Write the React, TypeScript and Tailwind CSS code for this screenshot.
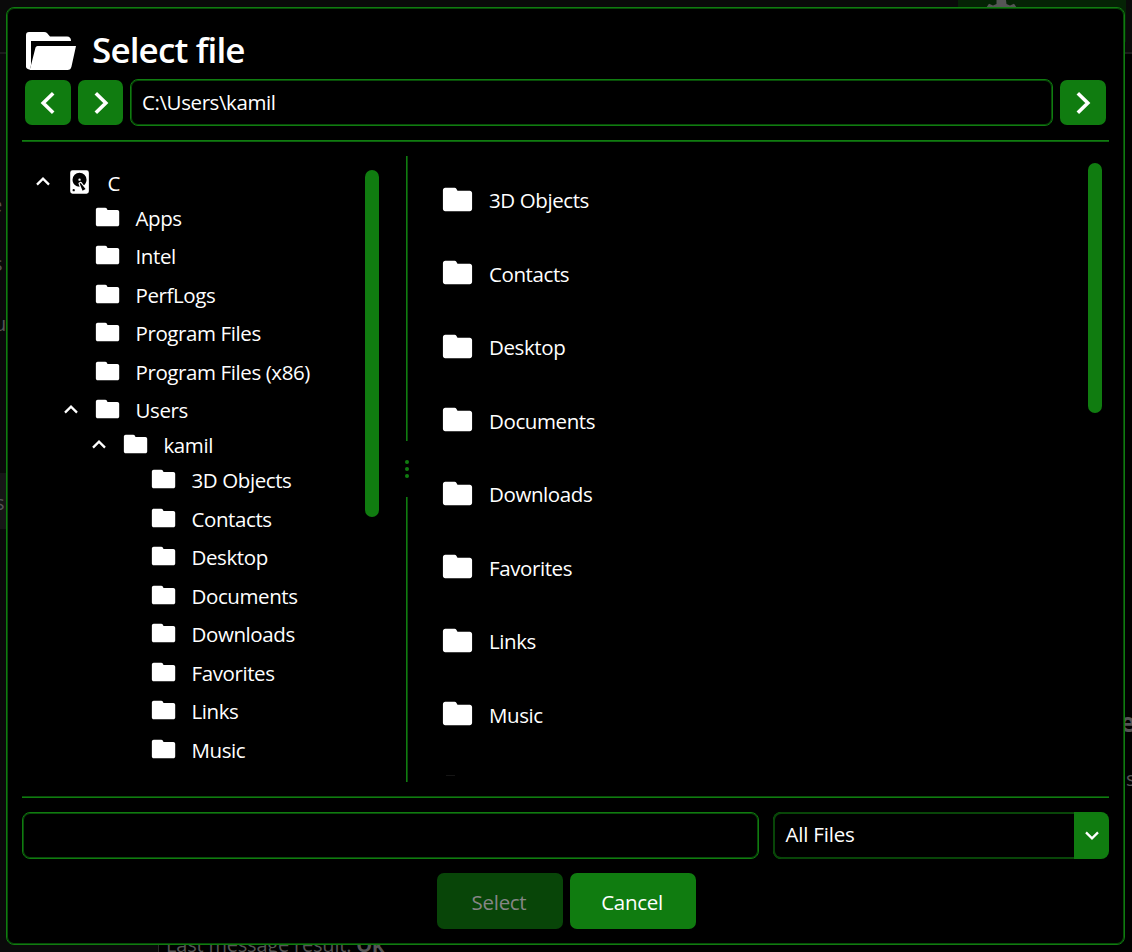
import React from "react";

type TreeRow = { label: string; open?: boolean; drive?: boolean; pad: string };

const tree: TreeRow[] = [
  { label: "C", open: true, drive: true, pad: "pl-[11px]" },
  { label: "Apps", pad: "pl-[39px]" },
  { label: "Intel", pad: "pl-[39px]" },
  { label: "PerfLogs", pad: "pl-[39px]" },
  { label: "Program Files", pad: "pl-[39px]" },
  { label: "Program Files (x86)", pad: "pl-[39px]" },
  { label: "Users", open: true, pad: "pl-[39px]" },
  { label: "kamil", open: true, pad: "pl-[67px]" },
  { label: "3D Objects", pad: "pl-[95px]" },
  { label: "Contacts", pad: "pl-[95px]" },
  { label: "Desktop", pad: "pl-[95px]" },
  { label: "Documents", pad: "pl-[95px]" },
  { label: "Downloads", pad: "pl-[95px]" },
  { label: "Favorites", pad: "pl-[95px]" },
  { label: "Links", pad: "pl-[95px]" },
  { label: "Music", pad: "pl-[95px]" },
];

const files = ["3D Objects", "Contacts", "Desktop", "Documents", "Downloads", "Favorites", "Links", "Music"];

function Folder({ className, viewBox = "0 0 24 24" }: { className: string; viewBox?: string }) {
  return (
    <svg viewBox={viewBox} className={className} fill="currentColor">
      <path d="M10 4H3.6C2.7 4 2 4.7 2 5.6V18.4C2 19.3 2.7 20 3.6 20H20.4C21.3 20 22 19.3 22 18.4V7.6C22 6.7 21.3 6 20.4 6H12L11.2 4.6C11 4.2 10.5 4 10 4Z" />
    </svg>
  );
}

function HardDisk() {
  return (
    <svg viewBox="0.4 0 24 24" className="ml-[-0.5px] mt-[-3px] size-7 shrink-0" fill="currentColor">
      <path d="M6,2H18A2,2 0 0,1 20,4V20A2,2 0 0,1 18,22H6A2,2 0 0,1 4,20V4A2,2 0 0,1 6,2M12,4A6,6 0 0,0 6,10C6,13.31 8.69,16 12.1,16L11.22,13.77C10.95,13.29 11.11,12.68 11.59,12.4L12.45,11.9C12.93,11.63 13.54,11.79 13.82,12.27L15.74,14.69C17.12,13.59 18,11.9 18,10A6,6 0 0,0 12,4M12,9A1,1 0 0,1 13,10A1,1 0 0,1 12,11A1,1 0 0,1 11,10A1,1 0 0,1 12,9M7,18A1,1 0 0,0 6,19A1,1 0 0,0 7,20A1,1 0 0,0 8,19A1,1 0 0,0 7,18M12.09,13.27L14.58,19.58L17.17,18.08L12.95,12.77L12.09,13.27Z" />
    </svg>
  );
}

function Chevron({ d, className }: { d: string; className: string }) {
  return (
    <svg viewBox="0 0 24 24" className={className} fill="none" stroke="currentColor">
      <path d={d} />
    </svg>
  );
}

const LEFT = "M17.2 2.200L7.200 12L17.2 21.800";
const RIGHT = "M6.800 2.200L16.800 12L6.800 21.800";

function NavButton({ d, className }: { d: string; className: string }) {
  return (
    <button className={`flex h-[45px] shrink-0 items-center justify-center rounded-[7px] bg-[#107c10] ${className}`}>
      <Chevron d={d} className="size-6 stroke-[3.6]" />
    </button>
  );
}

function Backdrop() {
  return (
    <div className="absolute inset-0 overflow-hidden bg-black text-[20px] text-[#555]">
      <div className="absolute left-0 top-0 h-full w-[158px] bg-[#0a0a0a]" />
      <div className="absolute left-0 top-0 box-content h-[52px] w-full border-b-2 border-[#1c1c1c] bg-[#0a0a0a]" />
      <div className="absolute left-[958px] top-0 h-[42px] w-[168px] bg-[#052305]" />
      <svg className="absolute left-[986px] top-0" width="31" height="8" viewBox="0 0 31 8" fill="#555">
        <path d="M10.500 0H20L20.500 4L24 5.500L28 3.700L31 8H0L3 3.700L7 5.500L10.500 4Z" />
      </svg>
      <div className="absolute left-0 top-[473px] h-14 w-[158px] bg-[#161616]" />
      <div className="absolute bottom-0 left-[158px] h-2 w-px bg-[#2a2a2a]" />
      <span className="absolute left-[-9px] top-[191px]">e</span>
      <span className="absolute left-[-7px] top-[250px]">s</span>
      <span className="absolute left-[-6px] top-[310px]">u</span>
      <span className="absolute left-[-5px] top-[489px]">s</span>
      <span className="absolute left-[1120px] top-[708px] text-[26px] font-bold">e</span>
      <span className="absolute left-[1126px] top-[765px]">s</span>
      <span className="absolute left-[166px] top-[931px] whitespace-nowrap tracking-[-0.2px]">
        Last message result: <b>Ok</b>
      </span>
    </div>
  );
}

export default function App() {
  return (
    <div className="relative h-[952px] w-[1132px] overflow-hidden bg-black font-['Open_Sans',sans-serif] text-[20.5px] leading-[28px] tracking-[-0.4px] text-white">
      <Backdrop />
      <div className="absolute left-[6px] top-[7px] flex h-[938px] w-[1119px] flex-col rounded-[8px] border border-[#107c10] bg-black px-[15px] py-px shadow-[inset_0_0_0_1px_#084c08]">
        <header className="flex h-[71px] shrink-0 items-start pl-[4px] pt-[23px]">
          <svg width="50" height="38" viewBox="0 0 50 38" fill="currentColor">
            <path d="M3 0H18Q20 0 21 1L24 4.500H41Q45 4.500 45 9H5V33L4 37.500Q0 37 0 34.500V3Q0 0 3 0Z" />
            <path d="M11.500 14H50L45.500 34.500Q44.800 38 41.500 38H3.500L4.300 36L9.500 15.500Q10 14 11.500 14Z" />
          </svg>
          <h1 className="ml-4 mt-[-4px] text-[35px] font-semibold leading-[44px] tracking-[-0.85px]">Select file</h1>
        </header>
        <div className="flex h-[60px] shrink-0 items-start px-[3px]">
          <NavButton d={LEFT} className="w-[46px]" />
          <NavButton d={RIGHT} className="ml-[7px] w-[45px]" />
          <div className="ml-[7px] mt-[-1px] flex h-[47px] flex-1 items-center rounded-[8px] border border-[#107c10] pb-[2px] pl-[11px] shadow-[inset_0_0_0_1px_#084c08]">
            C:\Users\kamil
          </div>
          <NavButton d={RIGHT} className="ml-[7px] w-[46px]" />
        </div>
        <div className="h-[2px] shrink-0 border-b border-[#0c600c] bg-[#107c10]" />

        <main className="flex h-[654px] shrink-0">
          <nav className="w-[343px] pt-[24px]">
            {tree.map((row) => (
              <div
                key={row.label + row.pad}
                className={`flex h-[35px] items-center ${row.pad} ${row.open ? "" : "mb-[3.5px]"}`}
              >
                <span className="flex w-[33px] shrink-0">
                  {row.open && <Chevron d="M3 16L12 7L21 16" className="ml-[1.5px] mt-[-3px] size-[16px] stroke-[3.4]" />}
                </span>
                {row.drive ? (
                  <HardDisk />
                ) : (
                  <Folder viewBox="0.4 0 24 24" className="ml-[-0.5px] mt-[-3.5px] size-7 shrink-0" />
                )}
                <span className="ml-[14px] mt-[-2px] whitespace-nowrap">{row.label}</span>
              </div>
            ))}
          </nav>
          <div className="mt-[28px] h-[347px] w-[14px] rounded-full bg-[#107c10]" />
          <div className="ml-[27px] mt-[14px] flex h-[626px] w-[2px] flex-col items-center">
            <div className="h-[285px] w-full border-r border-[#084c08] bg-[#107c10]" />
            <div className="flex h-[56px] flex-col items-center justify-center gap-[2.5px]">
              <i className="size-[4.5px] rounded-full bg-[#107c10]" />
              <i className="size-[4.5px] rounded-full bg-[#107c10]" />
              <i className="size-[4.5px] rounded-full bg-[#107c10]" />
            </div>
            <div className="h-[285px] w-full border-r border-[#084c08] bg-[#107c10]" />
          </div>
          <div className="flex-1 pl-[32px] pt-[21px]">
            {files.map((name) => (
              <div key={name} className="flex h-[73.5px] items-center">
                <Folder className="mt-[-1px] size-[35px] shrink-0" />
                <span className="ml-[14px] mt-[1px]">{name}</span>
              </div>
            ))}
            <div className="ml-[6px] mt-[24px] h-px w-[9px] bg-[#151515]" />
          </div>
          <div className="mr-[7px] mt-[21px] h-[250px] w-[14px] rounded-full bg-[#107c10]" />
        </main>

        <div className="h-[2px] shrink-0 border-t border-[#084c08] bg-[#107c10]" />
        <div className="mt-[14px] flex h-[47px] shrink-0 gap-[14px]">
          <div className="w-[737px] rounded-[8px] border border-[#107c10] shadow-[inset_0_0_0_1px_#084c08]" />
          <div className="flex flex-1 overflow-hidden rounded-[8px] bg-[#107c10]">
            <div className="flex flex-1 items-center rounded-l-[8px] border-y-2 border-l-2 border-[#084508] bg-black pb-[4px] pl-[10.5px] tracking-[-0.2px]">
              All Files
            </div>
            <div className="flex w-[35px] items-center justify-center">
              <Chevron d="M3 8L12 17L21 8" className="mt-[-1px] size-[16px] stroke-[3.4]" />
            </div>
          </div>
        </div>
        <footer className="mt-[14px] flex shrink-0 justify-center gap-[7px] pl-[2px]">
          <button className="h-14 w-[126px] rounded-[7px] bg-[#084508] pr-[2px] pt-[2px] tracking-[-0.3px] text-[#858585]">Select</button>
          <button className="h-14 w-[126px] rounded-[7px] bg-[#107c10] pr-[2px] pt-[2px] tracking-[-0.3px]">Cancel</button>
        </footer>
      </div>
    </div>
  );
}
